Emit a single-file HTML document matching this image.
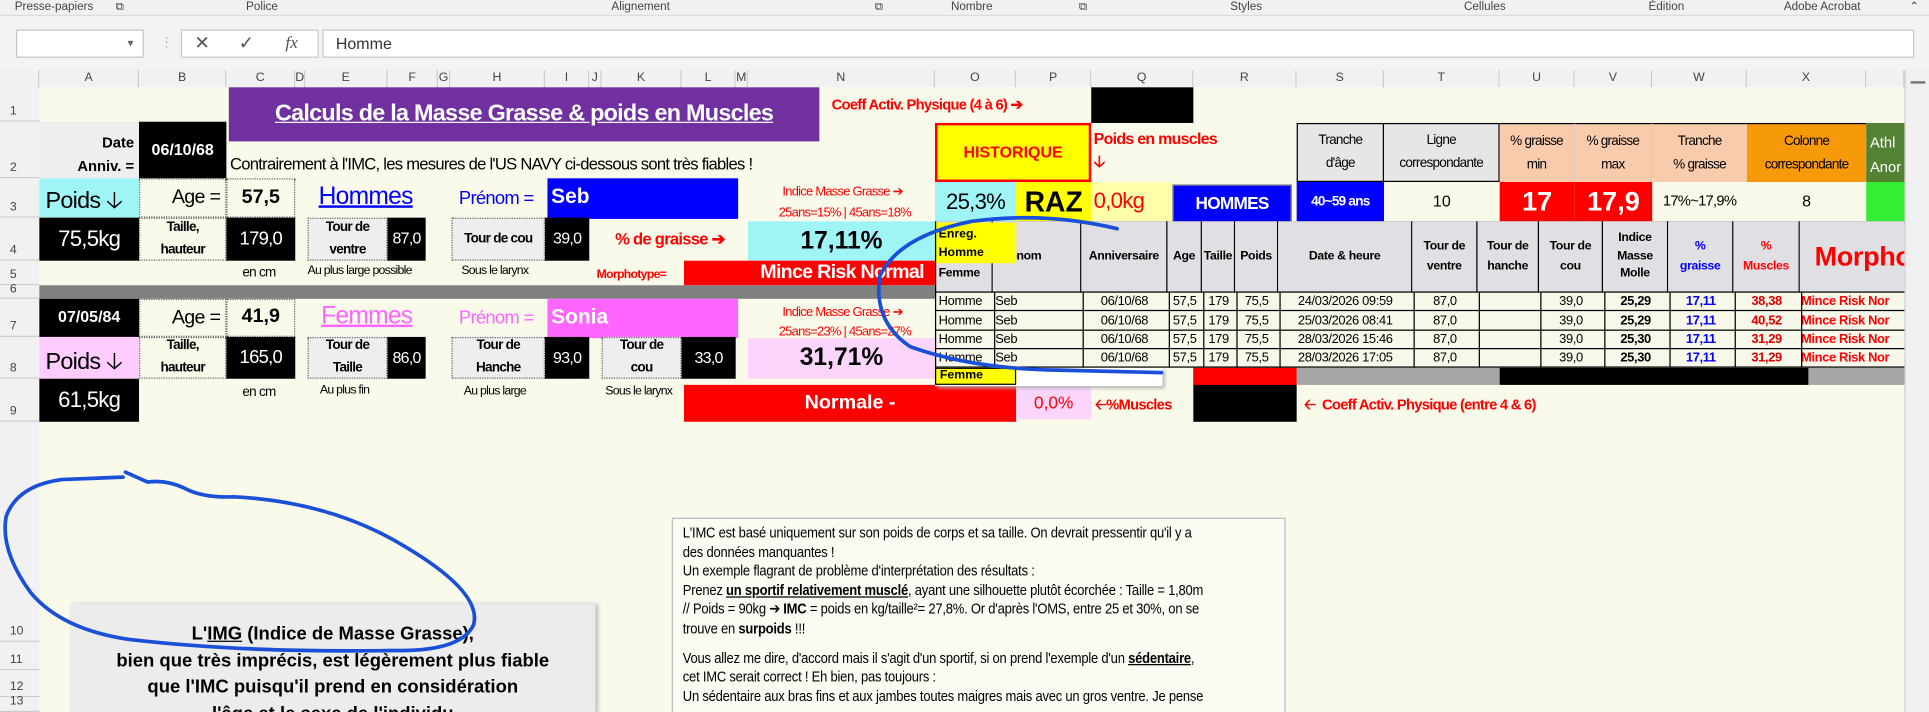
<!DOCTYPE html>
<html><head><meta charset="utf-8">
<style>
*{margin:0;padding:0;box-sizing:border-box}
html,body{width:1929px;height:712px;overflow:hidden;background:#fafaeb}
#w{position:absolute;left:0;top:0;width:1568px;height:579px;overflow:hidden;transform:scale(1.23023,1.2297);transform-origin:0 0;background:#fafaeb;font-family:"Liberation Sans",sans-serif;color:#000}
.a{position:absolute;white-space:nowrap}
.c{position:absolute;display:flex;align-items:center;justify-content:center;text-align:center;line-height:1.15;white-space:nowrap}
.b{font-weight:bold}
.k{background:#000;color:#fff}
.dot{border:1px dotted #666}
.hd{position:absolute;top:57px;height:14px;font-size:10px;color:#444;text-align:center;border-right:1px solid #ccc;line-height:14px;background:#f1f1f1}
.rn{position:absolute;left:0;width:32px;font-size:10px;color:#444;background:#f1f1f1;border-bottom:1px solid #ccc;display:flex;align-items:flex-end;padding:0 0 2px 8px}
.ht{position:absolute;top:180px;height:58px;background:#e0dfe3;border-right:1px solid #000;font-size:10px;font-weight:bold;display:flex;align-items:center;justify-content:center;text-align:center;line-height:1.6;letter-spacing:-0.3px}
.tr{position:absolute;left:760px;width:788px;height:15px;border-bottom:1px solid #000;font-size:10.5px;letter-spacing:-0.3px}
.tr span{position:absolute;top:0;line-height:15px;text-align:center;white-space:nowrap}
.red{color:#f00}
.n{letter-spacing:-0.6px}
</style></head><body><div id="w">
<div class="a" style="left:0;top:0;width:1568px;height:12px;background:#f1f1f1;font-size:9.5px;color:#444;line-height:11px">
<span class="a" style="left:12px">Presse-papiers</span><span class="a" style="left:94px">⧉</span>
<span class="a" style="left:200px">Police</span><span class="a" style="left:711px">⧉</span>
<span class="a" style="left:497px">Alignement</span>
<span class="a" style="left:773px">Nombre</span><span class="a" style="left:877px">⧉</span>
<span class="a" style="left:1000px">Styles</span>
<span class="a" style="left:1190px">Cellules</span>
<span class="a" style="left:1340px">Édition</span>
<span class="a" style="left:1450px">Adobe Acrobat</span><span class="a" style="left:1552px">⌃</span>
</div>
<div class="a" style="left:0;top:12px;width:1568px;height:45px;background:#f3f3f3;border-top:1px solid #ddd"></div>
<div class="a" style="left:13px;top:24px;width:104px;height:23px;background:#fff;border:1px solid #c6c6c6;font-size:8px;color:#666;text-align:right;padding:6px 6px 0 0">▼</div>
<div class="a" style="left:130px;top:28px;font-size:11px;color:#aaa">⋮</div>
<div class="a" style="left:147px;top:24px;width:112px;height:23px;background:#fff;border:1px solid #c6c6c6;font-size:15px;color:#555;line-height:21px"><span class="a" style="left:10px">✕</span><span class="a" style="left:46px">✓</span><span class="a" style="left:84px;font-family:'Liberation Serif',serif;font-style:italic;font-size:14px">fx</span></div>
<div class="a" style="left:262px;top:24px;width:1294px;height:23px;background:#fff;border:1px solid #c6c6c6;font-size:13px;color:#333;padding:3px 0 0 10px">Homme</div>
<div class="hd" style="left:0;width:32px"></div>
<div class="hd" style="left:32px;width:81px">A</div><div class="hd" style="left:113px;width:71px">B</div><div class="hd" style="left:184px;width:56px">C</div><div class="hd" style="left:240px;width:8px">D</div><div class="hd" style="left:248px;width:67px">E</div><div class="hd" style="left:315px;width:41px">F</div><div class="hd" style="left:356px;width:10px">G</div><div class="hd" style="left:366px;width:77px">H</div><div class="hd" style="left:443px;width:36px">I</div><div class="hd" style="left:479px;width:10px">J</div><div class="hd" style="left:489px;width:65px">K</div><div class="hd" style="left:554px;width:44px">L</div><div class="hd" style="left:598px;width:10px">M</div><div class="hd" style="left:608px;width:152px">N</div><div class="hd" style="left:760px;width:66px">O</div><div class="hd" style="left:826px;width:61px">P</div><div class="hd" style="left:887px;width:83px">Q</div><div class="hd" style="left:970px;width:84px">R</div><div class="hd" style="left:1054px;width:71px">S</div><div class="hd" style="left:1125px;width:94px">T</div><div class="hd" style="left:1219px;width:61px">U</div><div class="hd" style="left:1280px;width:63px">V</div><div class="hd" style="left:1343px;width:77px">W</div><div class="hd" style="left:1420px;width:97px">X</div><div class="hd" style="left:1517px;width:31px"></div>
<div class="a" style="left:1548px;top:57px;width:20px;height:522px;background:#f0f0f0;border-left:1px solid #ccc"></div>
<div class="a" style="left:1553px;top:66px;width:12px;height:2px;background:#777"></div>
<div class="rn" style="top:71px;height:28px">1</div><div class="rn" style="top:99px;height:46px">2</div><div class="rn" style="top:145px;height:32px">3</div><div class="rn" style="top:177px;height:35px">4</div><div class="rn" style="top:212px;height:20px">5</div><div class="rn" style="top:232px;height:11px;line-height:8px">6</div><div class="rn" style="top:243px;height:31px">7</div><div class="rn" style="top:274px;height:34px">8</div><div class="rn" style="top:308px;height:35px">9</div><div class="rn" style="top:343px;height:179px">10</div><div class="rn" style="top:522px;height:23px">11</div><div class="rn" style="top:545px;height:22px">12</div><div class="rn" style="top:567px;height:12px">13</div>

<div class="c n" style="left:186px;top:71px;width:480px;height:44px;background:#7030a0;color:#fff;font-size:19px;font-weight:bold;text-decoration:underline">Calculs de la Masse Grasse &amp; poids en Muscles</div>
<div class="a red b n" style="left:676px;top:78px;font-size:12px">Coeff Activ. Physique (4 à 6) ➔</div>
<div class="a k" style="left:887px;top:71px;width:83px;height:29px"></div>
<div class="a b" style="left:32px;top:99px;width:81px;height:46px;background:#eee;font-size:12px;text-align:right;padding:8px 4px 0 0;line-height:1.55">Date<br>Anniv. =</div>
<div class="c k b" style="left:113px;top:99px;width:71px;height:46px;font-size:13px">06/10/68</div>
<div class="a n" style="left:187px;top:126px;font-size:13.5px">Contrairement à l'IMC, les mesures de l'US NAVY ci-dessous sont très fiables !</div>
<div class="c b" style="left:760px;top:100px;width:127px;height:48px;background:#ff0;border:2px solid #f00;color:#f00;font-size:13px">HISTORIQUE</div>
<div class="a red b n" style="left:889px;top:103px;font-size:13px;line-height:19px">Poids en muscles<br>🡣</div>
<div class="c n" style="left:1054px;top:100px;width:71px;height:48px;background:#e6e6e6;border:1px solid #000;font-size:11px;line-height:1.7">Tranche<br>d'âge</div>
<div class="c n" style="left:1125px;top:100px;width:94px;height:48px;background:#e6e6e6;border:1px solid #000;border-left:0;font-size:11px;line-height:1.7">Ligne<br>correspondante</div>
<div class="c n" style="left:1219px;top:100px;width:61px;height:48px;background:#f8cbad;border-top:1px solid #000;border-right:1px solid #ccc;font-size:11px;line-height:1.7">% graisse<br>min</div>
<div class="c n" style="left:1280px;top:100px;width:63px;height:48px;background:#f8cbad;border-top:1px solid #000;border-right:1px solid #ccc;font-size:11px;line-height:1.7">% graisse<br>max</div>
<div class="c n" style="left:1343px;top:100px;width:77px;height:48px;background:#f8cbad;border-top:1px solid #000;font-size:11px;line-height:1.7">Tranche<br>% graisse</div>
<div class="c n" style="left:1420px;top:100px;width:97px;height:48px;background:#f79a0a;border-top:1px solid #000;font-size:11px;line-height:1.7">Colonne<br>correspondante</div>
<div class="a" style="left:1517px;top:100px;width:31px;height:48px;background:#548235;color:#fff;font-size:12px;padding:6px 0 0 3px;line-height:1.7;overflow:hidden">Athl<br>Anor</div>

<div class="a n" style="left:32px;top:145px;width:81px;height:32px;background:#9ff5f5;font-size:19px;padding:4px 0 0 5px">Poids 🡣</div>
<div class="a dot n" style="left:113px;top:145px;width:71px;height:32px;font-size:16px;text-align:right;padding:6px 4px 0 0">Age =</div>
<div class="c b dot" style="left:184px;top:145px;width:56px;height:32px;font-size:16px">57,5</div>
<div class="a n" style="left:259px;top:149px;font-size:20px;color:#00f;text-decoration:underline">Hommes</div>
<div class="a n" style="left:373px;top:153px;font-size:15px;color:#00f">Prénom =</div>
<div class="a b" style="left:445px;top:145px;width:155px;height:33px;background:#00f;color:#fff;font-size:17px;padding:5px 0 0 3px">Seb</div>
<div class="a red n" style="left:636px;top:150px;font-size:10.5px">Indice Masse Grasse ➔</div>
<div class="a red n" style="left:633px;top:167px;font-size:10.5px">25ans=15% | 45ans=18%</div>
<div class="c n" style="left:760px;top:148px;width:66px;height:32px;background:#9ff5f5;font-size:18px">25,3%</div>
<div class="c b" style="left:826px;top:148px;width:61px;height:32px;background:#ff0;font-size:23px">RAZ</div>
<div class="a red n" style="left:887px;top:148px;width:66px;height:32px;background:#ffffaa;font-size:18px;padding:5px 0 0 2px">0,0kg</div>
<div class="c b n" style="left:953px;top:150px;width:97px;height:31px;background:#00f;color:#fff;font-size:14px;border:1px solid #888">HOMMES</div>
<div class="c b n" style="left:1054px;top:148px;width:71px;height:32px;background:#00f;color:#fff;font-size:11px">40~59 ans</div>
<div class="c" style="left:1125px;top:148px;width:94px;height:32px;font-size:13px">10</div>
<div class="c b" style="left:1219px;top:148px;width:61px;height:32px;background:#f00;color:#fff;font-size:22px">17</div>
<div class="c b" style="left:1280px;top:148px;width:63px;height:32px;background:#f00;color:#fff;font-size:22px">17,9</div>
<div class="c n" style="left:1343px;top:148px;width:77px;height:32px;font-size:12px">17%~17,9%</div>
<div class="c" style="left:1420px;top:148px;width:97px;height:32px;font-size:13px">8</div>
<div class="a" style="left:1517px;top:148px;width:31px;height:32px;background:#33ee33"></div>

<div class="c k n" style="left:32px;top:177px;width:81px;height:35px;font-size:18px">75,5kg</div>
<div class="c b dot n" style="left:113px;top:177px;width:71px;height:35px;font-size:11px;line-height:1.6">Taille,<br>hauteur</div>
<div class="c k n" style="left:184px;top:177px;width:56px;height:35px;font-size:15px">179,0</div>
<div class="c b dot n" style="left:250px;top:177px;width:65px;height:35px;background:#eee;font-size:11px;line-height:1.6">Tour de<br>ventre</div>
<div class="c k n" style="left:315px;top:177px;width:31px;height:35px;font-size:13px">87,0</div>
<div class="c b dot n" style="left:367px;top:177px;width:76px;height:35px;background:#eee;font-size:11px">Tour de cou</div>
<div class="c k n" style="left:443px;top:177px;width:36px;height:35px;font-size:13px">39,0</div>
<div class="a red b n" style="left:500px;top:187px;font-size:13.5px">% de graisse ➔</div>
<div class="c b" style="left:608px;top:180px;width:152px;height:32px;background:#9ff5f5;font-size:20px">17,11%</div>
<div class="a n" style="left:197px;top:216px;font-size:11px">en cm</div>
<div class="a n" style="left:250px;top:215px;font-size:10px">Au plus large possible</div>
<div class="a n" style="left:375px;top:215px;font-size:10px">Sous le larynx</div>
<div class="a red b n" style="left:485px;top:218px;font-size:10px">Morphotype=</div>
<div class="a b n" style="left:556px;top:212px;width:204px;height:20px;background:#f00;color:#fff;font-size:16px;padding-left:62px;overflow:hidden;line-height:20px">Mince Risk Normal</div>
<div class="a" style="left:32px;top:232px;width:728px;height:11px;background:#808080"></div>
<div class="c k b" style="left:32px;top:243px;width:81px;height:31px;font-size:13px">07/05/84</div>
<div class="a dot n" style="left:113px;top:243px;width:71px;height:31px;font-size:16px;text-align:right;padding:6px 4px 0 0">Age =</div>
<div class="c b dot" style="left:184px;top:243px;width:56px;height:31px;font-size:16px">41,9</div>
<div class="a n" style="left:261px;top:246px;font-size:20px;color:#f6f;text-decoration:underline">Femmes</div>
<div class="a n" style="left:373px;top:250px;font-size:15px;color:#f6f">Prénom =</div>
<div class="a b" style="left:445px;top:243px;width:155px;height:32px;background:#f6f;color:#fff;font-size:17px;padding:5px 0 0 3px">Sonia</div>
<div class="a red n" style="left:636px;top:248px;font-size:10.5px">Indice Masse Grasse ➔</div>
<div class="a red n" style="left:633px;top:264px;font-size:10.5px">25ans=23% | 45ans=27%</div>
<div class="a n" style="left:32px;top:274px;width:81px;height:34px;background:#fcf;font-size:19px;padding:6px 0 0 5px">Poids 🡣</div>
<div class="c b dot n" style="left:113px;top:274px;width:71px;height:34px;font-size:11px;line-height:1.6">Taille,<br>hauteur</div>
<div class="c k n" style="left:184px;top:274px;width:56px;height:34px;font-size:15px">165,0</div>
<div class="c b dot n" style="left:250px;top:274px;width:65px;height:34px;background:#eee;font-size:11px;line-height:1.6">Tour de<br>Taille</div>
<div class="c k n" style="left:315px;top:274px;width:31px;height:34px;font-size:13px">86,0</div>
<div class="c b dot n" style="left:367px;top:274px;width:76px;height:34px;background:#eee;font-size:11px;line-height:1.6">Tour de<br>Hanche</div>
<div class="c k n" style="left:443px;top:274px;width:36px;height:34px;font-size:13px">93,0</div>
<div class="c b dot n" style="left:489px;top:274px;width:65px;height:34px;background:#eee;font-size:11px;line-height:1.6">Tour de<br>cou</div>
<div class="c k n" style="left:554px;top:274px;width:44px;height:34px;font-size:13px">33,0</div>
<div class="c b" style="left:608px;top:275px;width:152px;height:33px;background:#fcd5fc;font-size:20px">31,71%</div>
<div class="c k n" style="left:32px;top:308px;width:81px;height:35px;font-size:18px">61,5kg</div>
<div class="a n" style="left:197px;top:313px;font-size:11px">en cm</div>
<div class="a n" style="left:260px;top:312px;font-size:10px">Au plus fin</div>
<div class="a n" style="left:377px;top:313px;font-size:10px">Au plus large</div>
<div class="a n" style="left:492px;top:313px;font-size:10px">Sous le larynx</div>
<div class="c b" style="left:556px;top:313px;width:270px;height:30px;background:#f00;color:#fff;font-size:16px">Normale -</div>
<div class="c red" style="left:826px;top:313px;width:61px;height:28px;background:#fcd5fc;font-size:14px">0,0%</div>
<div class="a red b n" style="left:890px;top:320px;font-size:12px">🡠%Muscles</div>
<div class="a k" style="left:970px;top:299px;width:84px;height:44px;background:#000"></div>
<div class="a" style="left:970px;top:299px;width:84px;height:14px;background:#f00"></div>
<div class="a" style="left:1054px;top:299px;width:165px;height:14px;background:#a6a6a6"></div>
<div class="a" style="left:1219px;top:299px;width:251px;height:14px;background:#000"></div>
<div class="a" style="left:1470px;top:299px;width:78px;height:14px;background:#a6a6a6"></div>
<div class="a red b n" style="left:1060px;top:320px;font-size:12px">🡠 &nbsp;Coeff Activ. Physique (entre 4 &amp; 6)</div>

<div class="a" style="left:760px;top:299px;width:185px;height:15px;background:#fff;box-shadow:2px 2px 3px #aaa"></div>
<div class="a b" style="left:760px;top:299px;width:66px;height:14px;background:#ff0;border:1px solid #000;font-size:10px;padding-left:3px">Femme</div>
<div class="a" style="left:760px;top:180px;width:788px;height:119px;background:#f7f7ea;border-top:1px solid #000"></div>
<div class="ht" style="left:760px;width:47px;justify-content:flex-start;padding:28px 0 0 3px">Femme</div>
<div class="ht" style="left:807px;width:72px;justify-content:flex-start;padding-left:14px">énom</div>
<div class="ht" style="left:879px;width:70px">Anniversaire</div>
<div class="ht" style="left:949px;width:28px">Age</div>
<div class="ht" style="left:977px;width:27px">Taille</div>
<div class="ht" style="left:1004px;width:35px">Poids</div>
<div class="ht" style="left:1039px;width:109px">Date &amp; heure</div>
<div class="ht" style="left:1148px;width:53px">Tour de<br>ventre</div>
<div class="ht" style="left:1201px;width:50px">Tour de<br>hanche</div>
<div class="ht" style="left:1251px;width:52px">Tour de<br>cou</div>
<div class="ht" style="left:1303px;width:53px;line-height:1.45">Indice<br>Masse<br>Molle</div>
<div class="ht" style="left:1356px;width:53px;color:#00f">%<br>graisse</div>
<div class="ht" style="left:1409px;width:54px;color:#f00">%<br>Muscles</div>
<div class="ht" style="left:1463px;width:85px;color:#f00;font-size:22px;justify-content:flex-start;padding-left:12px;overflow:hidden;white-space:nowrap;border-right:0">Morpho</div>
<div class="a" style="left:760px;top:237px;width:788px;height:1px;background:#000"></div>
<div class="a b" style="left:760px;top:181px;width:66px;height:33px;background:#ff0;font-size:10px;padding:2px 0 0 3px;line-height:1.5">Enreg.<br>Homme</div>

<div class="tr" style="top:238px"><span style="left:3px">Homme</span><span style="left:49px">Seb</span><span style="left:119px;width:70px">06/10/68</span><span style="left:189px;width:28px">57,5</span><span style="left:217px;width:27px">179</span><span style="left:244px;width:35px">75,5</span><span style="left:279px;width:109px">24/03/2026 09:59</span><span style="left:388px;width:53px">87,0</span><span style="left:491px;width:52px">39,0</span><span class="b" style="left:543px;width:53px">25,29</span><span class="b" style="left:596px;width:53px;color:#00f">17,11</span><span class="b" style="left:649px;width:54px;color:#d00">38,38</span><span class="b" style="left:704px;color:#f00">Mince Risk Nor</span></div>
<div class="tr" style="top:254px"><span style="left:3px">Homme</span><span style="left:49px">Seb</span><span style="left:119px;width:70px">06/10/68</span><span style="left:189px;width:28px">57,5</span><span style="left:217px;width:27px">179</span><span style="left:244px;width:35px">75,5</span><span style="left:279px;width:109px">25/03/2026 08:41</span><span style="left:388px;width:53px">87,0</span><span style="left:491px;width:52px">39,0</span><span class="b" style="left:543px;width:53px">25,29</span><span class="b" style="left:596px;width:53px;color:#00f">17,11</span><span class="b" style="left:649px;width:54px;color:#d00">40,52</span><span class="b" style="left:704px;color:#f00">Mince Risk Nor</span></div>
<div class="tr" style="top:269px"><span style="left:3px">Homme</span><span style="left:49px">Seb</span><span style="left:119px;width:70px">06/10/68</span><span style="left:189px;width:28px">57,5</span><span style="left:217px;width:27px">179</span><span style="left:244px;width:35px">75,5</span><span style="left:279px;width:109px">28/03/2026 15:46</span><span style="left:388px;width:53px">87,0</span><span style="left:491px;width:52px">39,0</span><span class="b" style="left:543px;width:53px">25,30</span><span class="b" style="left:596px;width:53px;color:#00f">17,11</span><span class="b" style="left:649px;width:54px;color:#d00">31,29</span><span class="b" style="left:704px;color:#f00">Mince Risk Nor</span></div>
<div class="tr" style="top:284px"><span style="left:3px">Homme</span><span style="left:49px">Seb</span><span style="left:119px;width:70px">06/10/68</span><span style="left:189px;width:28px">57,5</span><span style="left:217px;width:27px">179</span><span style="left:244px;width:35px">75,5</span><span style="left:279px;width:109px">28/03/2026 17:05</span><span style="left:388px;width:53px">87,0</span><span style="left:491px;width:52px">39,0</span><span class="b" style="left:543px;width:53px">25,30</span><span class="b" style="left:596px;width:53px;color:#00f">17,11</span><span class="b" style="left:649px;width:54px;color:#d00">31,29</span><span class="b" style="left:704px;color:#f00">Mince Risk Nor</span></div>
<div class="a" style="left:760px;top:180px;width:788px;height:119px;border-left:1px solid #000">
<div class="a" style="left:47px;top:58px;width:1px;height:61px;background:#000"></div><div class="a" style="left:119px;top:58px;width:1px;height:61px;background:#000"></div><div class="a" style="left:189px;top:58px;width:1px;height:61px;background:#000"></div><div class="a" style="left:217px;top:58px;width:1px;height:61px;background:#000"></div><div class="a" style="left:244px;top:58px;width:1px;height:61px;background:#000"></div><div class="a" style="left:279px;top:58px;width:1px;height:61px;background:#000"></div><div class="a" style="left:388px;top:58px;width:1px;height:61px;background:#000"></div><div class="a" style="left:441px;top:58px;width:1px;height:61px;background:#000"></div><div class="a" style="left:491px;top:58px;width:1px;height:61px;background:#000"></div><div class="a" style="left:543px;top:58px;width:1px;height:61px;background:#000"></div><div class="a" style="left:596px;top:58px;width:1px;height:61px;background:#000"></div><div class="a" style="left:649px;top:58px;width:1px;height:61px;background:#000"></div><div class="a" style="left:703px;top:58px;width:1px;height:61px;background:#000"></div>
</div>

<div class="a" style="left:57px;top:491px;width:427px;height:90px;background:#ececec;box-shadow:2px 0 3px #bbb;font-weight:bold;font-size:15px;text-align:center;line-height:21.5px;padding-top:14px">L'<u>IMG</u> (Indice de Masse Grasse),<br>bien que très imprécis, est légèrement plus fiable<br>que l'IMC puisqu'il prend en considération<br>l'âge et le sexe de l'individu</div>
<div class="a" style="left:546px;top:421px;width:499px;height:160px;background:#fbfbf4;border:1px solid #bbb;overflow:hidden">
<div class="a" style="left:8px;top:4px;width:600px;font-size:12px;line-height:15.6px;transform:scaleX(0.88);transform-origin:0 0;letter-spacing:-0.2px">L'IMC est basé uniquement sur son poids de corps et sa taille. On devrait pressentir qu'il y a<br>des données manquantes !<br>Un exemple flagrant de problème d'interprétation des résultats :<br>Prenez <b><u>un sportif relativement musclé</u></b>, ayant une silhouette plutôt écorchée : Taille = 1,80m<br>// Poids = 90kg ➔ <b>IMC</b> = poids en kg/taille²= 27,8%. Or d'après l'OMS, entre 25 et 30%, on se<br>trouve en <b>surpoids</b> !!!<br><div style="height:8px"></div>Vous allez me dire, d'accord mais il s'agit d'un sportif, si on prend l'exemple d'un <b><u>sédentaire</u></b>,<br>cet IMC serait correct ! Eh bien, pas toujours :<br>Un sédentaire aux bras fins et aux jambes toutes maigres mais avec un gros ventre. Je pense</div></div>

<svg class="a" style="left:0;top:0" width="1568" height="579" viewBox="0 0 1568 579">
<path d="M102 384 L120 392 Q135 390 150 397 Q165 405 190 404 Q270 408 330 445 Q392 482 385 508 Q375 530 320 529 Q200 531 105 520 Q50 512 25 482 Q0 448 5 420 Q14 395 50 390 L100 388" fill="none" stroke="#1a4fd8" stroke-width="3" stroke-linecap="round"/>
<path d="M908 186 Q850 172 790 180 Q730 192 715 225 Q710 262 740 282 Q790 300 860 301 L944 303" fill="none" stroke="#1a4fd8" stroke-width="3" stroke-linecap="round"/>
</svg>
</div></body></html>
